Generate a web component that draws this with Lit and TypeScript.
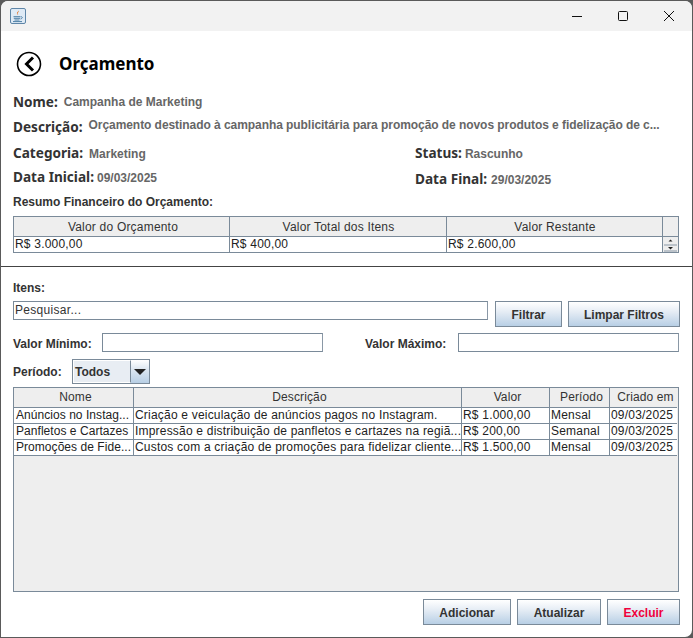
import { LitElement, html, css } from "lit";
import { customElement } from "lit/decorators.js";

const items = [
  ["Anúncios no Instag...", "Criação e veiculação de anúncios pagos no Instagram.", "R$ 1.000,00", "Mensal", "09/03/2025"],
  ["Panfletos e Cartazes", "Impressão e distribuição de panfletos e cartazes na regiã...", "R$ 200,00", "Semanal", "09/03/2025"],
  ["Promoções de Fide...", "Custos com a criação de promoções para fidelizar cliente...", "R$ 1.500,00", "Mensal", "09/03/2025"],
];

@customElement("app-root")
export class AppRoot extends LitElement {
  static styles = css`
    :host { display: block; width: 693px; height: 638px; background: #5a5a5a; overflow: hidden; font-family: "Liberation Sans", Arial, sans-serif; }
    * { box-sizing: border-box; }
    .win { width: 691px; height: 636px; margin: 1px 0 0 1px; background: #fff; border-radius: 7px 7px 7px 0; overflow: hidden; display: flex; flex-direction: column; }
    .bar { height: 30px; flex: none; background: #f2f2f2; display: flex; align-items: center; padding-left: 9px; }
    .bar .java { margin-top: -1px; }
    .ctl { margin-left: auto; display: flex; }
    .ctl span { width: 46px; height: 30px; display: flex; align-items: center; justify-content: center; }
    .top { height: 235px; flex: none; padding: 0 12px; display: flex; flex-direction: column; }
    .head { height: 66px; display: flex; align-items: center; gap: 17px; padding: 0 0 0 3px; flex: none; }
    h1 { margin: -1px 0 0; font: 700 17px/24px "Noto Sans", sans-serif; color: #000; }
    .lab { font: 700 13.6px/18px "Noto Sans", sans-serif; color: #333; white-space: nowrap; }
    .val { font: 700 12px/14px "Liberation Sans", Arial, sans-serif; color: #666; white-space: nowrap; }
    .line { display: flex; align-items: center; gap: 6px; }
    .nome { height: 18px; margin-top: -4px; }
    .desc { height: 18px; margin-top: 7px; }
    .desc .val { margin-top: -4px; letter-spacing: -.06px; }
    .two { display: grid; grid-template-columns: 402px 1fr; height: 18px; margin-top: 8px; }
    .two .val { margin-top: 2px; }
    .two .tight { gap: 3px; }
    .two.b { margin-top: 5px; }
    .two.b .line:first-child { margin-bottom: 2px; }
    .two .r2 { margin-top: 3px; gap: 4px; }
    .res { font: 700 12px/14px "Liberation Sans", Arial, sans-serif; color: #333; margin-top: 10px; height: 14px; flex: none; }
    .t1 { margin: 7px 0 0 0; width: 666px; flex: none; height: 37px; display: grid; grid-template-columns: 216px 217px 216px 17px; grid-template-rows: 21px 16px; border: 0; }
    .h, .c { font: 12px/15px "Liberation Sans", Arial, sans-serif; color: #333; white-space: nowrap; overflow: hidden; }
    .h { background: #eeeeee; border-top: 1px solid #7a8a99; border-left: 1px solid #7a8a99; border-bottom: 1px solid #7a8a99; text-align: center; line-height: 21px; letter-spacing: .2px; padding-left: 1px; }
    .t1 .h:first-child { padding-left: 3px; }
    .c { background: #fff; border-left: 1px solid #7a8a99; border-bottom: 1px solid #7a8a99; padding-left: 1px; color: #222; letter-spacing: .2px; }
    .sb { border-left: 1px solid #7a8a99; border-right: 1px solid #7a8a99; border-bottom: 1px solid #7a8a99; background: #eee; display: flex; flex-direction: column; justify-content: flex-end; }
    .h.end { border-right: 1px solid #7a8a99; }
    .sep { height: 1px; background: #444; flex: none; }
    .low { flex: 1; padding: 0 12px; display: flex; flex-direction: column; }
    .itens { font: 700 12px/14px "Liberation Sans", Arial, sans-serif; color: #333; margin-top: 14px; height: 14px; flex: none; }
    .search { display: flex; margin-top: 6px; height: 26px; flex: none; }
    .in { border: 1px solid #7a8a99; border-right-color: #8a98a6; background: #fff; border-bottom-width: 1px; height: 19px; font: 12px/17px "Liberation Sans", Arial, sans-serif; color: #333; padding-left: 1px; letter-spacing: .3px; }
    .search .in { width: 475px; }
    .btn { border: 1px solid #7a8a99; height: 26px; background: linear-gradient(#ffffff, #e6edf5 40%, #b8cfe5); font: 700 12px/26px "Liberation Sans", Arial, sans-serif; color: #333; text-align: center; flex: none; }
    .f { width: 67px; margin-left: 7px; }
    .l { width: 112px; margin-left: 6px; }
    .lab2 { font: 700 12px/14px "Liberation Sans", Arial, sans-serif; color: #333; white-space: nowrap; margin-top: 2px; }
    .mm { display: flex; align-items: center; margin-top: 6px; height: 19px; flex: none; }
    .mm .in { width: 221px; }
    .mm .a { width: 89px; }
    .mm .m2 { margin-left: 42px; width: 93px; }
    .per { display: flex; align-items: center; margin-top: 7px; height: 25px; flex: none; }
    .per .lab2 { width: 59px; margin-top: 0; }
    .combo { width: 78px; height: 25px; border: 1px solid #7a8a99; display: flex; background: #fff; }
    .combo b { width: 58px; background: #e8edf3; border: 1px solid #fff; border-right: 1px solid #7a8a99; font: 700 12px/23px "Liberation Sans", Arial, sans-serif; color: #333; padding-left: 1px; }
    .combo i { flex: 1; background: linear-gradient(#ffffff, #dde7f1 40%, #b8cfe5); display: flex; align-items: center; justify-content: center; }
    .t2 { margin-top: 3px; width: 666px; height: 205px; flex: none; background: #eee; border: 1px solid #7a8a99; display: grid; grid-template-columns: 119px 328px 88px 60px 68px; grid-auto-rows: 16px; grid-template-rows: 20px 16px 16px 16px; align-content: start; }
    .t2 .h { border-top: 0; line-height: 19px; padding-left: 4px; letter-spacing: .12px; }
    .t2 .h:first-child, .t2 .c.first { border-left: 0; }
    .t2 .c { letter-spacing: .2px; }
    .t2 .c.first { padding-left: 2px; letter-spacing: .05px; }
    .acts { display: flex; justify-content: flex-end; gap: 6px; margin-top: 7px; flex: none; padding-right: 0; }
    .add { width: 88px; }
    .upd { width: 84px; }
    .del { width: 73px; color: #f0003c; }
  `;

  render() {
    return html`<div class="win">
      <div class="bar">
        <svg class="java" width="16" height="16" viewBox="0 0 16 16">
          <rect x=".5" y=".5" width="15" height="15" rx="1.5" fill="#dfeaf5" stroke="#5f86a8"/>
          <path d="M8.600 2.500c1 1.300-1.400 2.300-.9 3.600.2.500.6.900.8 1.200-1.200-.8-2-1.600-1.400-2.800.4-.8 1.600-1.100 1.500-2z" fill="#e2762a"/>
          <path d="M3.500 8.700h6.700M3.800 10.300h6.200M4.500 12h5M3 13.600h9" stroke="#4d7fa5" stroke-width="1" fill="none"/>
          <path d="M10.500 8.800c2.300-.5 2.500 1.600 0 2.200" stroke="#4d7fa5" stroke-width="1" fill="none"/>
        </svg>
        <div class="ctl">
          <span><svg width="12" height="12" viewBox="0 0 12 12"><path d="M1 6.500h10" stroke="#111" stroke-width="1"/></svg></span>
          <span><svg width="12" height="12" viewBox="0 0 12 12"><rect x="1.500" y="1.500" width="9" height="9" rx="1" fill="none" stroke="#111"/></svg></span>
          <span><svg width="12" height="12" viewBox="0 0 12 12"><path d="M1 1l10 10M11 1L1 11" stroke="#111" stroke-width="1"/></svg></span>
        </div>
      </div>
      <div class="top">
        <div class="head">
          <svg width="26" height="26" viewBox="0 0 26 26"><circle cx="13" cy="13" r="11.500" fill="#fff" stroke="#000" stroke-width="1.600"/><path d="M17 6.500L10.500 13l6.500 6.500" fill="none" stroke="#000" stroke-width="3"/></svg>
          <h1>Orçamento</h1>
        </div>
        <div class="line nome"><span class="lab">Nome:</span><span class="val">Campanha de Marketing</span></div>
        <div class="line desc"><span class="lab">Descrição:</span><span class="val">Orçamento destinado à campanha publicitária para promoção de novos produtos e fidelização de c...</span></div>
        <div class="two">
          <div class="line"><span class="lab">Categoria:</span><span class="val">Marketing</span></div>
          <div class="line tight"><span class="lab">Status:</span><span class="val">Rascunho</span></div>
        </div>
        <div class="two b">
          <div class="line tight"><span class="lab">Data Inicial:</span><span class="val">09/03/2025</span></div>
          <div class="line r2"><span class="lab">Data Final:</span><span class="val">29/03/2025</span></div>
        </div>
        <div class="res">Resumo Financeiro do Orçamento:</div>
        <div class="t1">
          <div class="h">Valor do Orçamento</div><div class="h">Valor Total dos Itens</div><div class="h">Valor Restante</div><div class="h end"></div>
          <div class="c">R$ 3.000,00</div><div class="c">R$ 400,00</div><div class="c">R$ 2.600,00</div>
          <div class="sb">
            <svg width="15" height="14" viewBox="0 0 15 14"><path d="M5.500 3.500h4L7.500 1.500z" fill="#222"/><path d="M1 7h13" stroke="#8a98a6"/><path d="M1 13h13" stroke="#8a98a6"/><path d="M5 9h5l-2.500 2.500z" fill="#222"/></svg>
          </div>
        </div>
      </div>
      <div class="sep"></div>
      <div class="low">
        <div class="itens">Itens:</div>
        <div class="search">
          <div class="in">Pesquisar...</div>
          <div class="btn f">Filtrar</div>
          <div class="btn l">Limpar Filtros</div>
        </div>
        <div class="mm">
          <span class="lab2 a">Valor Mínimo:</span>
          <div class="in"></div>
          <span class="lab2 m2">Valor Máximo:</span>
          <div class="in"></div>
        </div>
        <div class="per">
          <span class="lab2">Período:</span>
          <div class="combo"><b>Todos</b><i><svg width="12" height="6" viewBox="0 0 12 6"><path d="M0 0h12L6 6z" fill="#222"/></svg></i></div>
        </div>
        <div class="t2">
          ${["Nome", "Descrição", "Valor", "Período", "Criado em"].map((h) => html`<div class="h">${h}</div>`)}
          ${items.map((r) => r.map((v, i) => html`<div class="c ${i === 0 ? "first" : ""}">${v}</div>`))}
        </div>
        <div class="acts">
          <div class="btn add">Adicionar</div>
          <div class="btn upd">Atualizar</div>
          <div class="btn del">Excluir</div>
        </div>
      </div>
    </div>`;
  }
}
